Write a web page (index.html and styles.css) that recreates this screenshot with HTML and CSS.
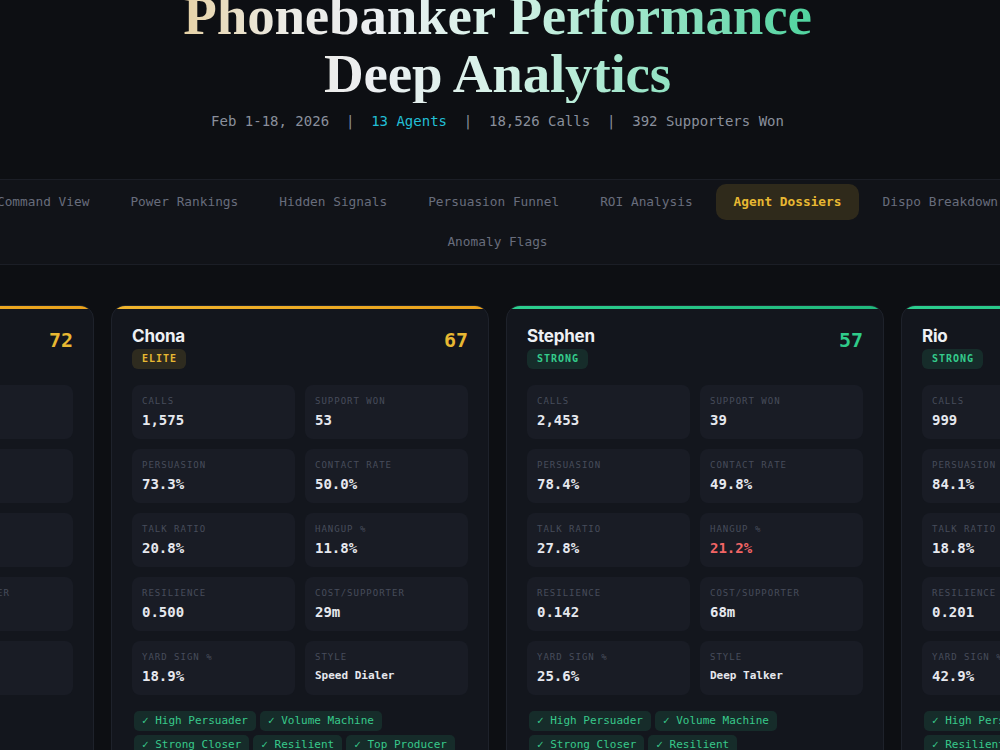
FILE: index.html
```html
<!DOCTYPE html>
<html lang="en">
<head>
<meta charset="utf-8">
<title>Phonebanker Performance Deep Analytics</title>
<link rel="stylesheet" href="styles.css">
</head>
<body>
<div class="page">
  <header class="hero">
    <h1 class="title">Phonebanker Performance<br>Deep Analytics</h1>
    <p class="meta">Feb 1-18, 2026<span class="sep">|</span><span class="hl">13 Agents</span><span class="sep">|</span>18,526 Calls<span class="sep">|</span>392 Supporters Won</p>
  </header>

  <nav class="tabs">
    <div class="tabs-inner">
      <a class="tab">Command View</a>
      <a class="tab">Power Rankings</a>
      <a class="tab">Hidden Signals</a>
      <a class="tab">Persuasion Funnel</a>
      <a class="tab">ROI Analysis</a>
      <a class="tab is-active">Agent Dossiers</a>
      <a class="tab">Dispo Breakdown</a>
      <a class="tab">Anomaly Flags</a>
    </div>
  </nav>

  <main class="dossiers">
    <article class="card card--elite">
      <div class="card-head">
        <div>
          <h2 class="agent">Marisol</h2>
          <span class="tier">ELITE</span>
        </div>
        <span class="score">72</span>
      </div>
      <div class="stats">
        <div class="stat"><span class="stat-label">CALLS</span><span class="stat-value">1,812</span></div>
        <div class="stat"><span class="stat-label">SUPPORT WON</span><span class="stat-value">61</span></div>
        <div class="stat"><span class="stat-label">PERSUASION</span><span class="stat-value">75.9%</span></div>
        <div class="stat"><span class="stat-label">CONTACT RATE</span><span class="stat-value">52.4%</span></div>
        <div class="stat"><span class="stat-label">TALK RATIO</span><span class="stat-value">22.1%</span></div>
        <div class="stat"><span class="stat-label">HANGUP %</span><span class="stat-value">9.6%</span></div>
        <div class="stat"><span class="stat-label">RESILIENCE</span><span class="stat-value">0.418</span></div>
        <div class="stat"><span class="stat-label">COST/SUPPORTER</span><span class="stat-value">31m</span></div>
        <div class="stat"><span class="stat-label">YARD SIGN %</span><span class="stat-value">21.3%</span></div>
        <div class="stat"><span class="stat-label">STYLE</span><span class="stat-value stat-value--text">Balanced</span></div>
      </div>
      <div class="traits">
        <span class="trait">✓ High Persuader</span>
        <span class="trait">✓ Volume Machine</span>
        <span class="trait">✓ Strong Closer</span>
        <span class="trait">✓ Resilient</span>
      </div>
    </article>

    <article class="card card--elite">
      <div class="card-head">
        <div>
          <h2 class="agent">Chona</h2>
          <span class="tier">ELITE</span>
        </div>
        <span class="score">67</span>
      </div>
      <div class="stats">
        <div class="stat"><span class="stat-label">CALLS</span><span class="stat-value">1,575</span></div>
        <div class="stat"><span class="stat-label">SUPPORT WON</span><span class="stat-value">53</span></div>
        <div class="stat"><span class="stat-label">PERSUASION</span><span class="stat-value">73.3%</span></div>
        <div class="stat"><span class="stat-label">CONTACT RATE</span><span class="stat-value">50.0%</span></div>
        <div class="stat"><span class="stat-label">TALK RATIO</span><span class="stat-value">20.8%</span></div>
        <div class="stat"><span class="stat-label">HANGUP %</span><span class="stat-value">11.8%</span></div>
        <div class="stat"><span class="stat-label">RESILIENCE</span><span class="stat-value">0.500</span></div>
        <div class="stat"><span class="stat-label">COST/SUPPORTER</span><span class="stat-value">29m</span></div>
        <div class="stat"><span class="stat-label">YARD SIGN %</span><span class="stat-value">18.9%</span></div>
        <div class="stat"><span class="stat-label">STYLE</span><span class="stat-value stat-value--text">Speed Dialer</span></div>
      </div>
      <div class="traits">
        <span class="trait">✓ High Persuader</span>
        <span class="trait">✓ Volume Machine</span>
        <span class="trait">✓ Strong Closer</span>
        <span class="trait">✓ Resilient</span>
        <span class="trait">✓ Top Producer</span>
      </div>
    </article>

    <article class="card card--strong">
      <div class="card-head">
        <div>
          <h2 class="agent">Stephen</h2>
          <span class="tier">STRONG</span>
        </div>
        <span class="score">57</span>
      </div>
      <div class="stats">
        <div class="stat"><span class="stat-label">CALLS</span><span class="stat-value">2,453</span></div>
        <div class="stat"><span class="stat-label">SUPPORT WON</span><span class="stat-value">39</span></div>
        <div class="stat"><span class="stat-label">PERSUASION</span><span class="stat-value">78.4%</span></div>
        <div class="stat"><span class="stat-label">CONTACT RATE</span><span class="stat-value">49.8%</span></div>
        <div class="stat"><span class="stat-label">TALK RATIO</span><span class="stat-value">27.8%</span></div>
        <div class="stat"><span class="stat-label">HANGUP %</span><span class="stat-value stat-value--bad">21.2%</span></div>
        <div class="stat"><span class="stat-label">RESILIENCE</span><span class="stat-value">0.142</span></div>
        <div class="stat"><span class="stat-label">COST/SUPPORTER</span><span class="stat-value">68m</span></div>
        <div class="stat"><span class="stat-label">YARD SIGN %</span><span class="stat-value">25.6%</span></div>
        <div class="stat"><span class="stat-label">STYLE</span><span class="stat-value stat-value--text">Deep Talker</span></div>
      </div>
      <div class="traits">
        <span class="trait">✓ High Persuader</span>
        <span class="trait">✓ Volume Machine</span>
        <span class="trait">✓ Strong Closer</span>
        <span class="trait">✓ Resilient</span>
      </div>
    </article>

    <article class="card card--strong">
      <div class="card-head">
        <div>
          <h2 class="agent">Rio</h2>
          <span class="tier">STRONG</span>
        </div>
        <span class="score">55</span>
      </div>
      <div class="stats">
        <div class="stat"><span class="stat-label">CALLS</span><span class="stat-value">999</span></div>
        <div class="stat"><span class="stat-label">SUPPORT WON</span><span class="stat-value">34</span></div>
        <div class="stat"><span class="stat-label">PERSUASION</span><span class="stat-value">84.1%</span></div>
        <div class="stat"><span class="stat-label">CONTACT RATE</span><span class="stat-value">46.2%</span></div>
        <div class="stat"><span class="stat-label">TALK RATIO</span><span class="stat-value">18.8%</span></div>
        <div class="stat"><span class="stat-label">HANGUP %</span><span class="stat-value">13.4%</span></div>
        <div class="stat"><span class="stat-label">RESILIENCE</span><span class="stat-value">0.201</span></div>
        <div class="stat"><span class="stat-label">COST/SUPPORTER</span><span class="stat-value">41m</span></div>
        <div class="stat"><span class="stat-label">YARD SIGN %</span><span class="stat-value">42.9%</span></div>
        <div class="stat"><span class="stat-label">STYLE</span><span class="stat-value stat-value--text">Speed Dialer</span></div>
      </div>
      <div class="traits">
        <span class="trait">✓ High Persuader</span>
        <span class="trait">✓ Yard Sign Pro</span>
        <span class="trait">✓ Resilient</span>
      </div>
    </article>
  </main>
</div>
</body>
</html>
```

FILE: styles.css
```css
html, body {
  overflow: hidden;
}

body {
  margin: 0;
  background: #0d0f13;
  color: #e6e8ee;
  font-family: "DejaVu Sans Mono", "Liberation Mono", monospace;
}

/* Wide canvas, centred on the viewport */
.page {
  width: 1563px;
  margin-left: calc(50% - 784px);
}

/* ---------- Hero ---------- */
.hero {
  text-align: center;
  margin-top: -13px;
  padding-bottom: 48px;
}

.title {
  display: inline-block;
  margin: 0;
  font-family: "Liberation Serif", "DejaVu Serif", serif;
  font-weight: 700;
  font-size: 55px;
  line-height: 58px;
  letter-spacing: -0.2px;
  background: linear-gradient(90deg, #e6d2a6 0%, #ecebe4 16%, #eceef1 30%, #d6f2e8 50%, #b4ebd6 64%, #84dfbb 82%, #4fd39e 100%);
  -webkit-background-clip: text;
  background-clip: text;
  color: transparent;
}

.meta {
  margin: 8px 0 0;
  font-size: 14px;
  line-height: 20px;
  color: #8a8f9c;
}

.meta .sep {
  margin: 0 16.8px;
}

.meta .hl {
  color: #22bfd6;
}

/* ---------- Tabs ---------- */
.tabs {
  background: #111318;
  border-top: 1px solid #1b1e26;
  border-bottom: 1px solid #1b1e26;
}

.tabs-inner {
  width: 1100px;
  margin: 0 auto;
  padding: 4px 0;
  display: flex;
  flex-wrap: wrap;
  justify-content: center;
  gap: 4px 5px;
}

.tab {
  padding: 10px 18px;
  border-radius: 10px;
  font-size: 12.8px;
  line-height: 16px;
  color: #686d7c;
  white-space: nowrap;
}

.tab.is-active {
  background: rgba(232, 184, 48, 0.14);
  color: #e8b832;
  font-weight: 700;
}

/* ---------- Dossier cards ---------- */
.dossiers {
  margin-top: 40px;
  display: grid;
  grid-template-columns: repeat(4, 378px);
  gap: 17px;
  align-items: start;
}

.card {
  position: relative;
  overflow: hidden;
  background: #13161d;
  border: 1px solid #1e222b;
  border-radius: 14px;
  padding: 20px 20px 24px;
}

.card::before {
  content: "";
  position: absolute;
  left: 0;
  right: 0;
  top: 0;
  height: 3px;
}

.card--elite::before {
  background: linear-gradient(90deg, #f0b52e, #e9a21c);
}

.card--strong::before {
  background: linear-gradient(90deg, #2ccf8f, #20b87c);
}

.card-head {
  display: flex;
  justify-content: space-between;
  align-items: flex-start;
  margin-bottom: 16px;
}

.agent {
  margin: 0;
  font-family: Inter, "Noto Sans", sans-serif;
  font-weight: 700;
  font-size: 17px;
  line-height: 20px;
  letter-spacing: -0.2px;
  color: #eef0f4;
}

.tier {
  display: inline-block;
  margin-top: 3px;
  padding: 3px 9px 3px 10px;
  border-radius: 6px;
  font-weight: 700;
  font-size: 10px;
  line-height: 14px;
  letter-spacing: 1px;
}

.card--elite .tier {
  background: rgba(232, 184, 48, 0.13);
  color: #e8b832;
}

.card--strong .tier {
  background: rgba(46, 204, 140, 0.12);
  color: #34cc8c;
}

.score {
  margin-top: 2px;
  font-weight: 700;
  font-size: 20px;
  line-height: 24px;
}

.card--elite .score {
  color: #e8b832;
}

.card--strong .score {
  color: #2fcb8a;
}

.stats {
  display: grid;
  grid-template-columns: 1fr 1fr;
  gap: 10px;
}

.stat {
  display: flex;
  flex-direction: column;
  gap: 4px;
  padding: 10px;
  background: #191c25;
  border-radius: 8px;
}

.stat-label {
  font-size: 9px;
  line-height: 12px;
  letter-spacing: 1px;
  color: #474c5b;
}

.stat-value {
  font-weight: 700;
  font-size: 14px;
  line-height: 18px;
  color: #e6e8ee;
}

.stat-value--text {
  font-size: 11px;
}

.stat-value--bad {
  color: #f26565;
}

.traits {
  display: flex;
  flex-wrap: wrap;
  gap: 4px;
  margin-top: 16px;
  padding-left: 2px;
}

.trait {
  padding: 3px 8px;
  border-radius: 5px;
  background: rgba(46, 204, 140, 0.12);
  color: #38c98b;
  font-size: 11px;
  line-height: 14px;
  white-space: nowrap;
}
```
